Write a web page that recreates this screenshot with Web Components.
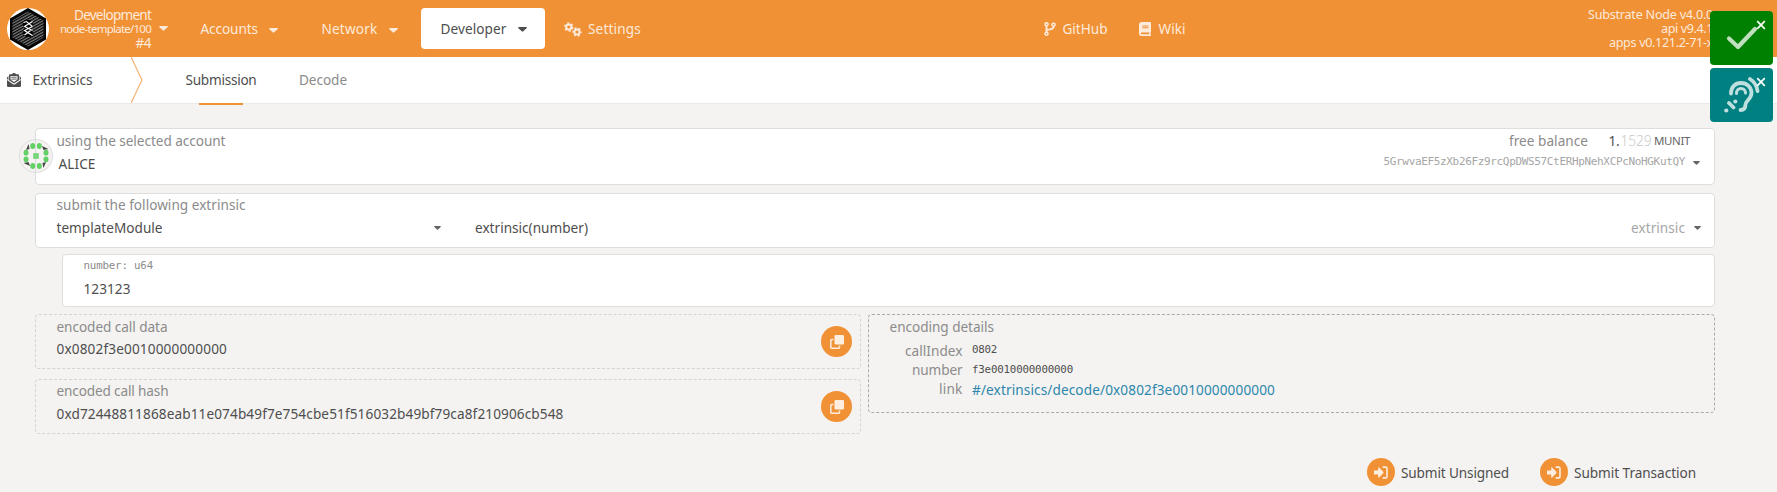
<!DOCTYPE html>
<html lang="en">
<head>
<meta charset="utf-8">
<title>Extrinsics</title>
<style>
html,body{margin:0;height:100%;overflow:hidden;background:#f4f3f2}
body{font-family:"Noto Sans","Open Sans",sans-serif;font-size:13.6px;color:#4e4e4e}
</style>
</head>
<body>
<explorer-app></explorer-app>
<script>
const define = (name, html, setup) => customElements.define(name, class extends HTMLElement {
  constructor() { super(); this.attachShadow({ mode: 'open' }); }
  connectedCallback() {
    if (this.ready) return;
    this.ready = true;
    this.shadowRoot.innerHTML = typeof html === 'function' ? html(this) : html;
    if (setup) setup(this);
  }
});

/* A single line of text whose tracking is adjusted to fill its w attribute. */
define('ui-text', el => `<style>
:host{display:block;flex:none;width:${el.getAttribute('w')}px;height:20px;line-height:20px;white-space:nowrap;
${el.hasAttribute('size') ? `font-size:${el.getAttribute('size')}px;` : ''}
${el.hasAttribute('mono') ? 'font-family:"DejaVu Sans Mono",monospace;' : ''}}
span{display:inline-block;vertical-align:top;line-height:inherit}
</style><span><slot></slot></span>`, el => {
  const span = el.shadowRoot.querySelector('span');
  const gap = (Number(el.getAttribute('w')) - span.getBoundingClientRect().width) / el.textContent.trim().length;
  span.style.letterSpacing = gap.toFixed(3) + 'px';
});

const icons = {
  caret: ['0 0 10 6', '<path d="M.9 0h8.2q1.2.5.4 1.5L5.8 5.2q-.8.7-1.6 0L.5 1.5Q-.3.5.9 0z" fill="currentColor"/>'],
  branch: ['0 0 384 512', '<g fill="none" stroke="currentColor" stroke-width="50"><circle cx="80" cy="80" r="52"/><circle cx="80" cy="432" r="52"/><circle cx="304" cy="96" r="52"/><path stroke-width="62" d="M80 132v248M304 148v20q0 76-74 90l-80 18q-70 14-70 64"/></g>'],
  book: ['0 0 448 512', '<path fill="currentColor" fill-rule="evenodd" d="M448 360V24c0-13-11-24-24-24H96C43 0 0 43 0 96v320c0 53 43 96 96 96h328c13 0 24-11 24-24v-16c0-8-4-14-9-19-4-15-4-59 0-74 5-4 9-11 9-19zM128 134c0-3 3-6 6-6h212c3 0 6 3 6 6v20c0 3-3 6-6 6H134c-3 0-6-3-6-6zm0 64c0-3 3-6 6-6h212c3 0 6 3 6 6v20c0 3-3 6-6 6H134c-3 0-6-3-6-6zm253 250H96c-18 0-32-14-32-32s14-32 32-32h285c-2 17-2 47 0 64z"/>'],
  gears: ['0 0 18 15', '<g fill="none" stroke="currentColor"><circle cx="4.800" cy="5" r="2.600" stroke-width="2"/><circle cx="4.800" cy="5" r="4" stroke-width="1.500" stroke-dasharray="2.090 2.090"/><circle cx="13" cy="10" r="2.600" stroke-width="2"/><circle cx="13" cy="10" r="4" stroke-width="1.500" stroke-dasharray="2.090 2.090" stroke-dashoffset="1"/></g>'],
  mail: ['0 0 14 14', '<path fill="currentColor" fill-rule="evenodd" d="M2 2.200Q2 1.200 3 1.200h1.600Q6.200 0 7 0t2.400 1.200H11q1 0 1 1v5L7 10.600 2 7.200zM3.500 3v3.600L7 9l3.500-2.400V3z"/><path stroke="currentColor" stroke-width=".9" d="M4.300 4.200h5.400M4.300 6.100h5.400"/><path fill="currentColor" d="M1.400 3v4L0 6V5q0-.7.5-1.100zM12.600 3v4L14 6V5q0-.7-.5-1.100zM0 7l6 4.200q1 .6 2 0L14 7v5.700Q14 14 12.700 14H1.300Q0 14 0 12.700z"/>'],
  copy: ['0 0 14 14', '<rect x="4.500" width="9.500" height="9.500" rx="1.200" fill="currentColor"/><path d="M3.500 4.500H1.500q-.7 0-.7.7v7.300q0 .7.7.7h7.300q.7 0 .7-.7v-2" fill="none" stroke="currentColor" stroke-width="1.500"/>'],
  enter: ['0 0 15 13', '<path fill="currentColor" d="M0 4.500h4.500V1.900q.3-.9 1-.3l4.400 4.200q.6.700 0 1.400l-4.400 4.200q-.7.600-1-.3V8.500H0z"/><path d="M10 1.100h2.400q1.500 0 1.500 1.500v7.800q0 1.500-1.500 1.500H10" fill="none" stroke="currentColor" stroke-width="1.700" stroke-linecap="round"/>'],
  check: ['0 0 32 24', '<path d="M3 12.500l9 8.500L29 3" fill="none" stroke="currentColor" stroke-width="4.200" stroke-linecap="round" stroke-linejoin="round"/>'],
  ear: ['0 0 36 36', '<g fill="none" stroke="currentColor" stroke-width="3.800" stroke-linecap="round" stroke-linejoin="round"><path d="M7 16.500C7 10 11 6 17 6s10.500 4.200 10.500 10-6 8-6 11.500-2 5.500-5 5.500"/><path d="M12.500 16.500c0-3.200 1.800-5 4.500-5s4.500 1.800 4.500 4.500" stroke-width="3"/><path d="M26 2c4 2.500 6.800 6.800 7.500 12M5 26l4.500 4.500"/></g><circle cx="2.300" cy="33.500" r="2.100" fill="currentColor"/><circle cx="11.300" cy="24.500" r="2.100" fill="currentColor"/>'],
  close: ['0 0 10 10', '<path d="M1.200 1.200l7.600 7.600M8.800 1.200L1.200 8.800" fill="none" stroke="currentColor" stroke-width="1.700"/>'],
  chevron: ['0 0 12 46', '<path d="M0 0l11 23L0 46" fill="none" stroke="#f4ad6b" stroke-width="1.100"/>'],
  avatar: ['-17 -17 34 34', '<circle r="16.500" fill="#f4f3f2" stroke="#ddd"/><path d="M-.5-16.500v33" stroke="#ddd"/><g fill="#444"><path d="M-10-6l2.500-6 1 5zM6-10l6.500 3-5 1zM10 6L7.500 12l-1-5zM-6 10l-6.500-3 5-1z"/></g><g fill="#62cf67"><ellipse cx="-3.300" cy="-10" rx="2.500" ry="2.900"/><ellipse cx="3.300" cy="-10" rx="2.500" ry="2.900"/><ellipse cx="-3.300" cy="10" rx="2.500" ry="2.900"/><ellipse cx="3.300" cy="10" rx="2.500" ry="2.900"/><ellipse cx="-10" cy="-3.300" rx="2.500" ry="2.900"/><ellipse cx="-10" cy="3.300" rx="2.500" ry="2.900"/><ellipse cx="10" cy="-3.300" rx="2.500" ry="2.900"/><ellipse cx="10" cy="3.300" rx="2.500" ry="2.900"/><path d="M-2.700-2.700h5.400v5.400h-5.400z"/></g><path d="M0-2v4M-2 0h4" stroke="#98dd9b" stroke-width=".8"/>'],
  logo: ['0 0 42 42', '<defs><pattern id="h" width="3" height="2.500" patternUnits="userSpaceOnUse" patternTransform="rotate(-29)"><path d="M0 1h3" stroke="#ccc" stroke-width=".8"/></pattern></defs><circle cx="21" cy="21" r="21" fill="#fff"/><path d="M21 0l18 10.500v21L21 42 3 31.500v-21z" fill="#050505"/><path d="M21 3.500L36.500 12.500v17L21 38.500 5.500 29.500v-17z" fill="url(#h)"/><path d="M17.500 12h6l3 4-2 5 2 5-3 3h-5l-3-4 2-4-2-5z" fill="#050505"/><path d="M16.500 14.500l3-1 6 5M25.500 13.500l-8 5 8 4M25.500 18.500l-8 4 8 5M17.500 27l6-4.500" stroke="#fff" stroke-width="1.100" fill="none"/>']
};
define('ui-icon', el => {
  const [box, art] = icons[el.getAttribute('name')];
  const w = el.getAttribute('w'), h = el.getAttribute('h');
  return `<style>:host{display:block;flex:none;width:${w}px;height:${h}px}svg{display:block}</style><svg width="${w}" height="${h}" viewBox="${box}" preserveAspectRatio="none">${art}</svg>`;
});

define('ui-card', `<style>
:host{display:block;box-sizing:border-box;background:#fff;border:1px solid #dededd;border-radius:4px;position:relative}
:host([dashed]){background:transparent;border:1px dashed #d3d3d2}
:host([dashed=dark]){border-color:#aaa}
</style><slot></slot>`);

define('round-button', `<style>:host{display:flex;flex:none;align-items:center;justify-content:center;width:28px;height:28px;border-radius:50%;background:#f19135;color:#fdeee0}
:host([large]){width:31px;height:31px}</style><slot></slot>`);

define('ui-toast', `<style>:host{display:flex;align-items:center;justify-content:center;width:63px;height:54px;border-radius:4px;background:#008000;color:#bfdfbf;position:relative}
:host([info]){background:#008080;color:#bfdfdf}
.x{position:absolute;right:7px;top:9px;color:#fff}</style><slot></slot><ui-icon class="x" name="close" w="10" h="10"></ui-icon>`);

define('top-bar', `<style>
:host{display:flex;height:57px;background:#f19135;color:#fdeadb;box-sizing:border-box;padding-left:7px;align-items:center}
.node{width:92px;margin-left:10px;display:flex;flex-direction:column;align-items:flex-end;justify-content:center;margin-right:8px}
.node ui-text,.info ui-text{height:14px;line-height:14px}
.item{display:flex;align-items:center;padding-top:1px}
.item ui-icon[name=caret]{margin-left:11px;margin-top:2px}
.pill{background:#fff;color:#4e4e4e;border-radius:4px;height:41px;width:124px;box-sizing:border-box;padding:0 0 0 19.500px;margin-left:23.500px}
.info{display:flex;flex-direction:column;align-items:flex-end;width:125px;margin-left:402.500px}
</style>
<ui-icon name="logo" w="42" h="42"></ui-icon>
<div class="node"><ui-text w="77">Development</ui-text><ui-text w="91" size="11.500">node-template/100</ui-text><ui-text w="15.500">#4</ui-text></div>
<ui-icon name="caret" w="9" h="5"></ui-icon>
<div class="item" style="margin-left:32.500px"><ui-text w="57.500">Accounts</ui-text><ui-icon name="caret" w="9" h="5"></ui-icon></div>
<div class="item" style="margin-left:43.500px"><ui-text w="56">Network</ui-text><ui-icon name="caret" w="9" h="5"></ui-icon></div>
<div class="item pill"><ui-text w="66">Developer</ui-text><ui-icon name="caret" w="9" h="5"></ui-icon></div>
<div class="item" style="margin-left:18.500px"><ui-icon name="gears" w="18" h="15"></ui-icon><ui-text w="53" style="margin-left:6.500px">Settings</ui-text></div>
<div class="item" style="margin-left:402.500px"><ui-icon name="branch" w="12" h="14"></ui-icon><ui-text w="45" style="margin-left:7px">GitHub</ui-text></div>
<div class="item" style="margin-left:31px"><ui-icon name="book" w="12" h="14"></ui-icon><ui-text w="27" style="margin-left:8px">Wiki</ui-text></div>
<div class="info"><ui-text size="12.600" w="125">Substrate Node v4.0.0</ui-text><ui-text size="12.600" w="52">api v9.4.1</ui-text><ui-text size="12.600" w="104">apps v0.121.2-71-x</ui-text></div>`);

define('tab-bar', `<style>
:host{display:flex;height:46px;background:#fff;border-bottom:1px solid #ebeae9;align-items:center;padding-left:7px}
.active{position:relative}
.active::after{content:"";position:absolute;left:13.500px;top:33px;width:44px;height:2px;background:#f19135}
</style>
<ui-icon name="mail" w="14" h="14"></ui-icon><ui-text w="60" style="margin-left:11.500px">Extrinsics</ui-text>
<ui-icon name="chevron" w="12" h="46" style="margin-left:38.500px"></ui-icon>
<ui-text class="active" w="71" style="margin-left:42.500px">Submission</ui-text><ui-text w="48" style="margin-left:42.500px;color:#8b8b8b">Decode</ui-text>`);

define('account-card', `<style>
:host{display:block}ui-card{height:57px;padding:2px 0 0 20.500px}
.row{display:flex;color:#8b8b8b;height:20px}
.avatar{position:absolute;left:-17px;top:10px}
.name{color:#4e4e4e;margin-left:2px}
</style><ui-card><ui-icon class="avatar" name="avatar" w="34" h="34"></ui-icon>
<div class="row"><ui-text w="169">using the selected account</ui-text><ui-text w="79" style="margin-left:1283.500px">free balance</ui-text><ui-text w="11" style="margin-left:20.500px;color:#4e4e4e">1.</ui-text><ui-text w="31" style="margin-left:1px;color:#c9c9c9;font-weight:300">1529</ui-text><ui-text w="36" size="11.500" style="margin-left:2.500px;color:#666">MUNIT</ui-text></div>
<div class="row" style="margin-top:3px"><ui-text class="name" w="37">ALICE</ui-text><ui-text mono size="11" w="301.500" style="margin-left:1288px;margin-top:-2px;color:#a6a6a6">5GrwvaEF5zXb26Fz9rcQpDWS57CtERHpNehXCPcNoHGKutQY</ui-text><ui-icon name="caret" w="7" h="4" style="margin:7px 0 0 8px;color:#666"></ui-icon></div></ui-card>`);

define('extrinsic-card', `<style>
:host{display:block;margin-top:8px}ui-card{height:55px;padding:1px 0 0 20.500px}
.row{display:flex;margin-top:3px;align-items:center}
ui-icon{color:#666}
</style><ui-card><ui-text w="189" style="color:#8b8b8b">submit the following extrinsic</ui-text>
<div class="row"><ui-text w="106">templateModule</ui-text><ui-icon name="caret" w="7" h="4" style="margin-left:271.500px"></ui-icon><ui-text w="113" style="margin-left:34px">extrinsic(number)</ui-text><ui-text w="54" style="margin-left:1043px;color:#a6a6a6">extrinsic</ui-text><ui-icon name="caret" w="7" h="4" style="margin-left:9px"></ui-icon></div></ui-card>`);

define('param-card', `<style>
:host{display:block;margin:6px 0 0 27px}ui-card{height:53px;padding:1px 0 0 20.500px}
</style><ui-card><ui-text mono size="10.800" w="69.500" style="color:#8b8b8b">number: u64</ui-text><ui-text w="47" style="margin-top:3px">123123</ui-text></ui-card>`);

define('output-box', `<style>
:host{display:block}ui-card{height:55px;padding:2px 8px 0 20.500px;display:flex;justify-content:space-between}
round-button{margin-top:9px}
</style><ui-card dashed><div><slot name="label"></slot><slot></slot></div>
<round-button large><ui-icon name="copy" w="14" h="14"></ui-icon></round-button></ui-card>`);

define('encoding-details', `<style>
:host{display:block}ui-card{height:99px;padding:2px 0 0 20.500px}
.grid{display:grid;grid-template-columns:73px auto;column-gap:9.500px;grid-auto-rows:19px;justify-items:start;margin-top:4px}
.k{justify-self:end;color:#8b8b8b}.m{margin-top:-1px}.l{color:#2d86ab;margin-top:1px}
ui-text.t{color:#8b8b8b}
</style><ui-card dashed="dark"><ui-text class="t" w="104.500">encoding details</ui-text><div class="grid">
<ui-text class="k" w="57.500">callIndex</ui-text><ui-text class="m" mono size="10.800" w="25">0802</ui-text>
<ui-text class="k" w="50.500">number</ui-text><ui-text class="m" style="margin-top:0" mono size="10.800" w="101">f3e0010000000000</ui-text>
<ui-text class="k" w="23.500">link</ui-text><ui-text class="l" w="303">#/extrinsics/decode/0x0802f3e0010000000000</ui-text></div></ui-card>`);

define('explorer-app', `<style>
:host{display:block;width:1777px;height:492px;position:relative}
main{padding:24px 62px 0 35px}
.out{display:grid;grid-template-columns:826px 847px;gap:7px;margin-top:7px}
.left{display:grid;gap:10px;align-content:start}
.actions{display:flex;align-items:center;justify-content:flex-end;padding-right:19px;margin-top:24px}
.toasts{position:absolute;left:1710px;top:11px;display:grid;gap:3px}
</style>
<top-bar></top-bar><tab-bar></tab-bar>
<main><account-card></account-card><extrinsic-card></extrinsic-card><param-card></param-card>
<div class="out"><div class="left">
<output-box><ui-text slot="label" w="111" style="color:#8b8b8b">encoded call data</ui-text><ui-text w="170.500" style="margin-top:2px">0x0802f3e0010000000000</ui-text></output-box>
<output-box><ui-text slot="label" w="112" style="color:#8b8b8b;margin-top:-1px">encoded call hash</ui-text><ui-text w="507" style="margin-top:3px">0xd72448811868eab11e074b49f7e754cbe51f516032b49bf79ca8f210906cb548</ui-text></output-box>
</div><encoding-details></encoding-details></div>
<div class="actions"><round-button><ui-icon name="enter" w="14" h="13"></ui-icon></round-button><ui-text w="108" style="margin:1px 0 0 6px">Submit Unsigned</ui-text>
<round-button style="margin-left:31px"><ui-icon name="enter" w="14" h="13"></ui-icon></round-button><ui-text w="122" style="margin:1px 0 0 6px">Submit Transaction</ui-text></div></main>
<div class="toasts"><ui-toast><ui-icon name="check" w="32" h="24"></ui-icon></ui-toast><ui-toast info><ui-icon name="ear" w="36" h="36"></ui-icon></ui-toast></div>`);
</script>
</body>
</html>
